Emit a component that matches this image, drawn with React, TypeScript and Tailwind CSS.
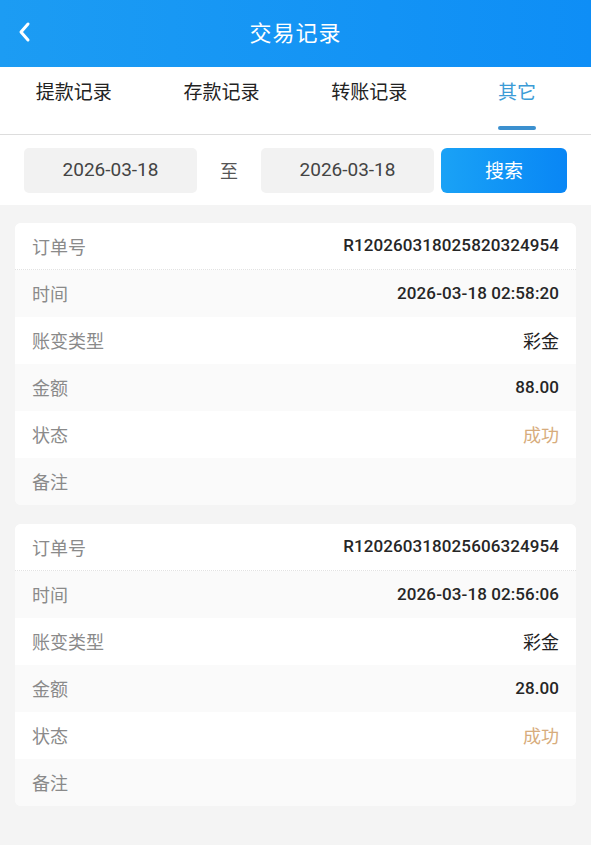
const cjk = "font-['Noto_Sans_CJK_SC',sans-serif]";
const num = "font-['Roboto','Noto_Sans_CJK_SC',sans-serif]";

const records = [
  { id: "R12026031802582032495 4".replace(" ", ""), time: "2026-03-18 02:58:20", type: "彩金", amount: "88.00" },
  { id: "R12026031802560632495 4".replace(" ", ""), time: "2026-03-18 02:56:06", type: "彩金", amount: "28.00" },
];

const tabs = ["提款记录", "存款记录", "转账记录", "其它"];

const Row = ({ label, value, shade, dotted, valueClass }: { label: string; value?: string; shade?: boolean; dotted?: boolean; valueClass?: string }) => (
  <div
    className={`flex items-center justify-between h-[47px] px-[17px] ${shade ? "bg-[#fafafa]" : "bg-white"} ${dotted ? "border-b border-dotted border-[#e2e2e2]" : ""}`}
  >
    <span className={`${cjk} text-[18px] text-[#8a8a8a]`}>{label}</span>
    {value && <span className={valueClass ?? `${num} text-[17px] font-medium text-[#262626] tracking-[0.1px]`}>{value}</span>}
  </div>
);

export default function App() {
  return (
    <div className={`w-[591px] min-h-[845px] bg-[#f4f4f4] ${cjk}`}>
      <header className="relative h-[67px] flex items-center justify-center pb-[5px] bg-gradient-to-r from-[#1c9cf3] to-[#0e8ef6]">
        <svg className="absolute left-[17px] top-[20px]" width="16" height="24" viewBox="0 0 16 24" fill="none">
          <path d="M11 4 L4 12 L11 20" stroke="white" strokeWidth="3" strokeLinecap="round" strokeLinejoin="round" />
        </svg>
        <h1 className="text-white text-[22px] tracking-[1px]">交易记录</h1>
      </header>

      <nav className="grid grid-cols-4 h-[68px] bg-white border-b border-[#dddddd]">
        {tabs.map((t, i) => (
          <div key={t} className="relative flex justify-center pt-[10px]">
            <span className={`text-[19px] ${i === 3 ? "text-[#3b9bd6]" : "text-[#222]"}`}>{t}</span>
            {i === 3 && <span className="absolute bottom-[4px] w-[38px] h-[4px] rounded-full bg-[#3b90cf]" />}
          </div>
        ))}
      </nav>

      <div className="flex items-center bg-white pl-[24px] pr-[24px] pt-[13px] pb-[12px]">
        <div className={`w-[173px] h-[45px] rounded-[5px] bg-[#f2f2f2] flex items-center justify-center ${num} text-[19px] text-[#444]`}>2026-03-18</div>
        <span className="w-[64px] text-center text-[18px] text-[#555]">至</span>
        <div className={`w-[173px] h-[45px] rounded-[5px] bg-[#f2f2f2] flex items-center justify-center ${num} text-[19px] text-[#444]`}>2026-03-18</div>
        <button className="ml-[7px] w-[126px] h-[45px] rounded-[6px] bg-gradient-to-r from-[#1aa2f6] to-[#0986f5] text-white text-[19px]">搜索</button>
      </div>

      <main className="px-[15px] pt-[18px] flex flex-col gap-[19px]">
        {records.map((r) => (
          <div key={r.id} className="rounded-[6px] overflow-hidden bg-white">
            <Row label="订单号" value={r.id} dotted />
            <Row label="时间" value={r.time} shade />
            <Row label="账变类型" value={r.type} valueClass="text-[18px] text-[#222]" />
            <Row label="金额" value={r.amount} shade />
            <Row label="状态" value="成功" valueClass="text-[18px] text-[#d7ac7c]" />
            <Row label="备注" shade />
          </div>
        ))}
      </main>
    </div>
  );
}
